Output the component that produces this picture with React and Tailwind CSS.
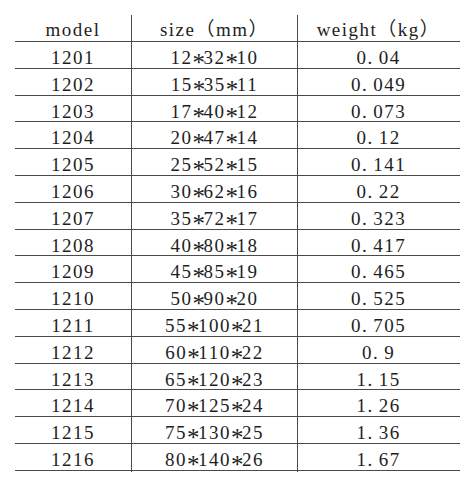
const rows = [
  ["1201", "12*32*10", "0.04"],
  ["1202", "15*35*11", "0.049"],
  ["1203", "17*40*12", "0.073"],
  ["1204", "20*47*14", "0.12"],
  ["1205", "25*52*15", "0.141"],
  ["1206", "30*62*16", "0.22"],
  ["1207", "35*72*17", "0.323"],
  ["1208", "40*80*18", "0.417"],
  ["1209", "45*85*19", "0.465"],
  ["1210", "50*90*20", "0.525"],
  ["1211", "55*100*21", "0.705"],
  ["1212", "60*110*22", "0.9"],
  ["1213", "65*120*23", "1.15"],
  ["1214", "70*125*24", "1.26"],
  ["1215", "75*130*25", "1.36"],
  ["1216", "80*140*26", "1.67"],
];

// weight values use a wide, half-width style dot
function Weight({ v }) {
  const [a, b] = v.split(".");
  return (
    <span>
      {a}
      <span className="pr-[5px]">.</span>
      {b}
    </span>
  );
}

// big centred asterisks like the original font
function Size({ v }) {
  const parts = v.split("*");
  return (
    <span className="flex items-center">
      {parts.map((p, i) => (
        <span key={i} className="flex items-center">
          {i > 0 && (
            <span className="inline-block w-[11px] text-center text-[25px] translate-y-[5px] tracking-normal">
              *
            </span>
          )}
          {p}
        </span>
      ))}
    </span>
  );
}

function Row({ cells, header }) {
  return (
    <div
      className={`grid grid-cols-[117px_166px_161px] border-b-[1.5px] border-[#4a4a4a] ${
        header ? "h-[27px]" : "h-[26.8px]"
      }`}
    >
      {cells.map((c, i) => (
        <div
          key={i}
          className={`flex items-center justify-center pt-[3px] ${
            i < 2 ? "border-r-[1.5px] border-[#4a4a4a]" : ""
          }`}
        >
          {header ? c : i === 2 ? <Weight v={c} /> : i === 1 ? <Size v={c} /> : c}
        </div>
      ))}
    </div>
  );
}

export default function App() {
  return (
    <div className="w-[475px] h-[488px] bg-white px-[15px] pt-[15px] text-[19px] leading-none tracking-[1.5px] text-[#1e1e1e] font-['Liberation_Serif','Noto_Sans_CJK_SC',serif]">
      <Row header cells={["model", "size（mm）", "weight（kg）"]} />
      {rows.map((r) => (
        <Row key={r[0]} cells={r} />
      ))}
    </div>
  );
}
